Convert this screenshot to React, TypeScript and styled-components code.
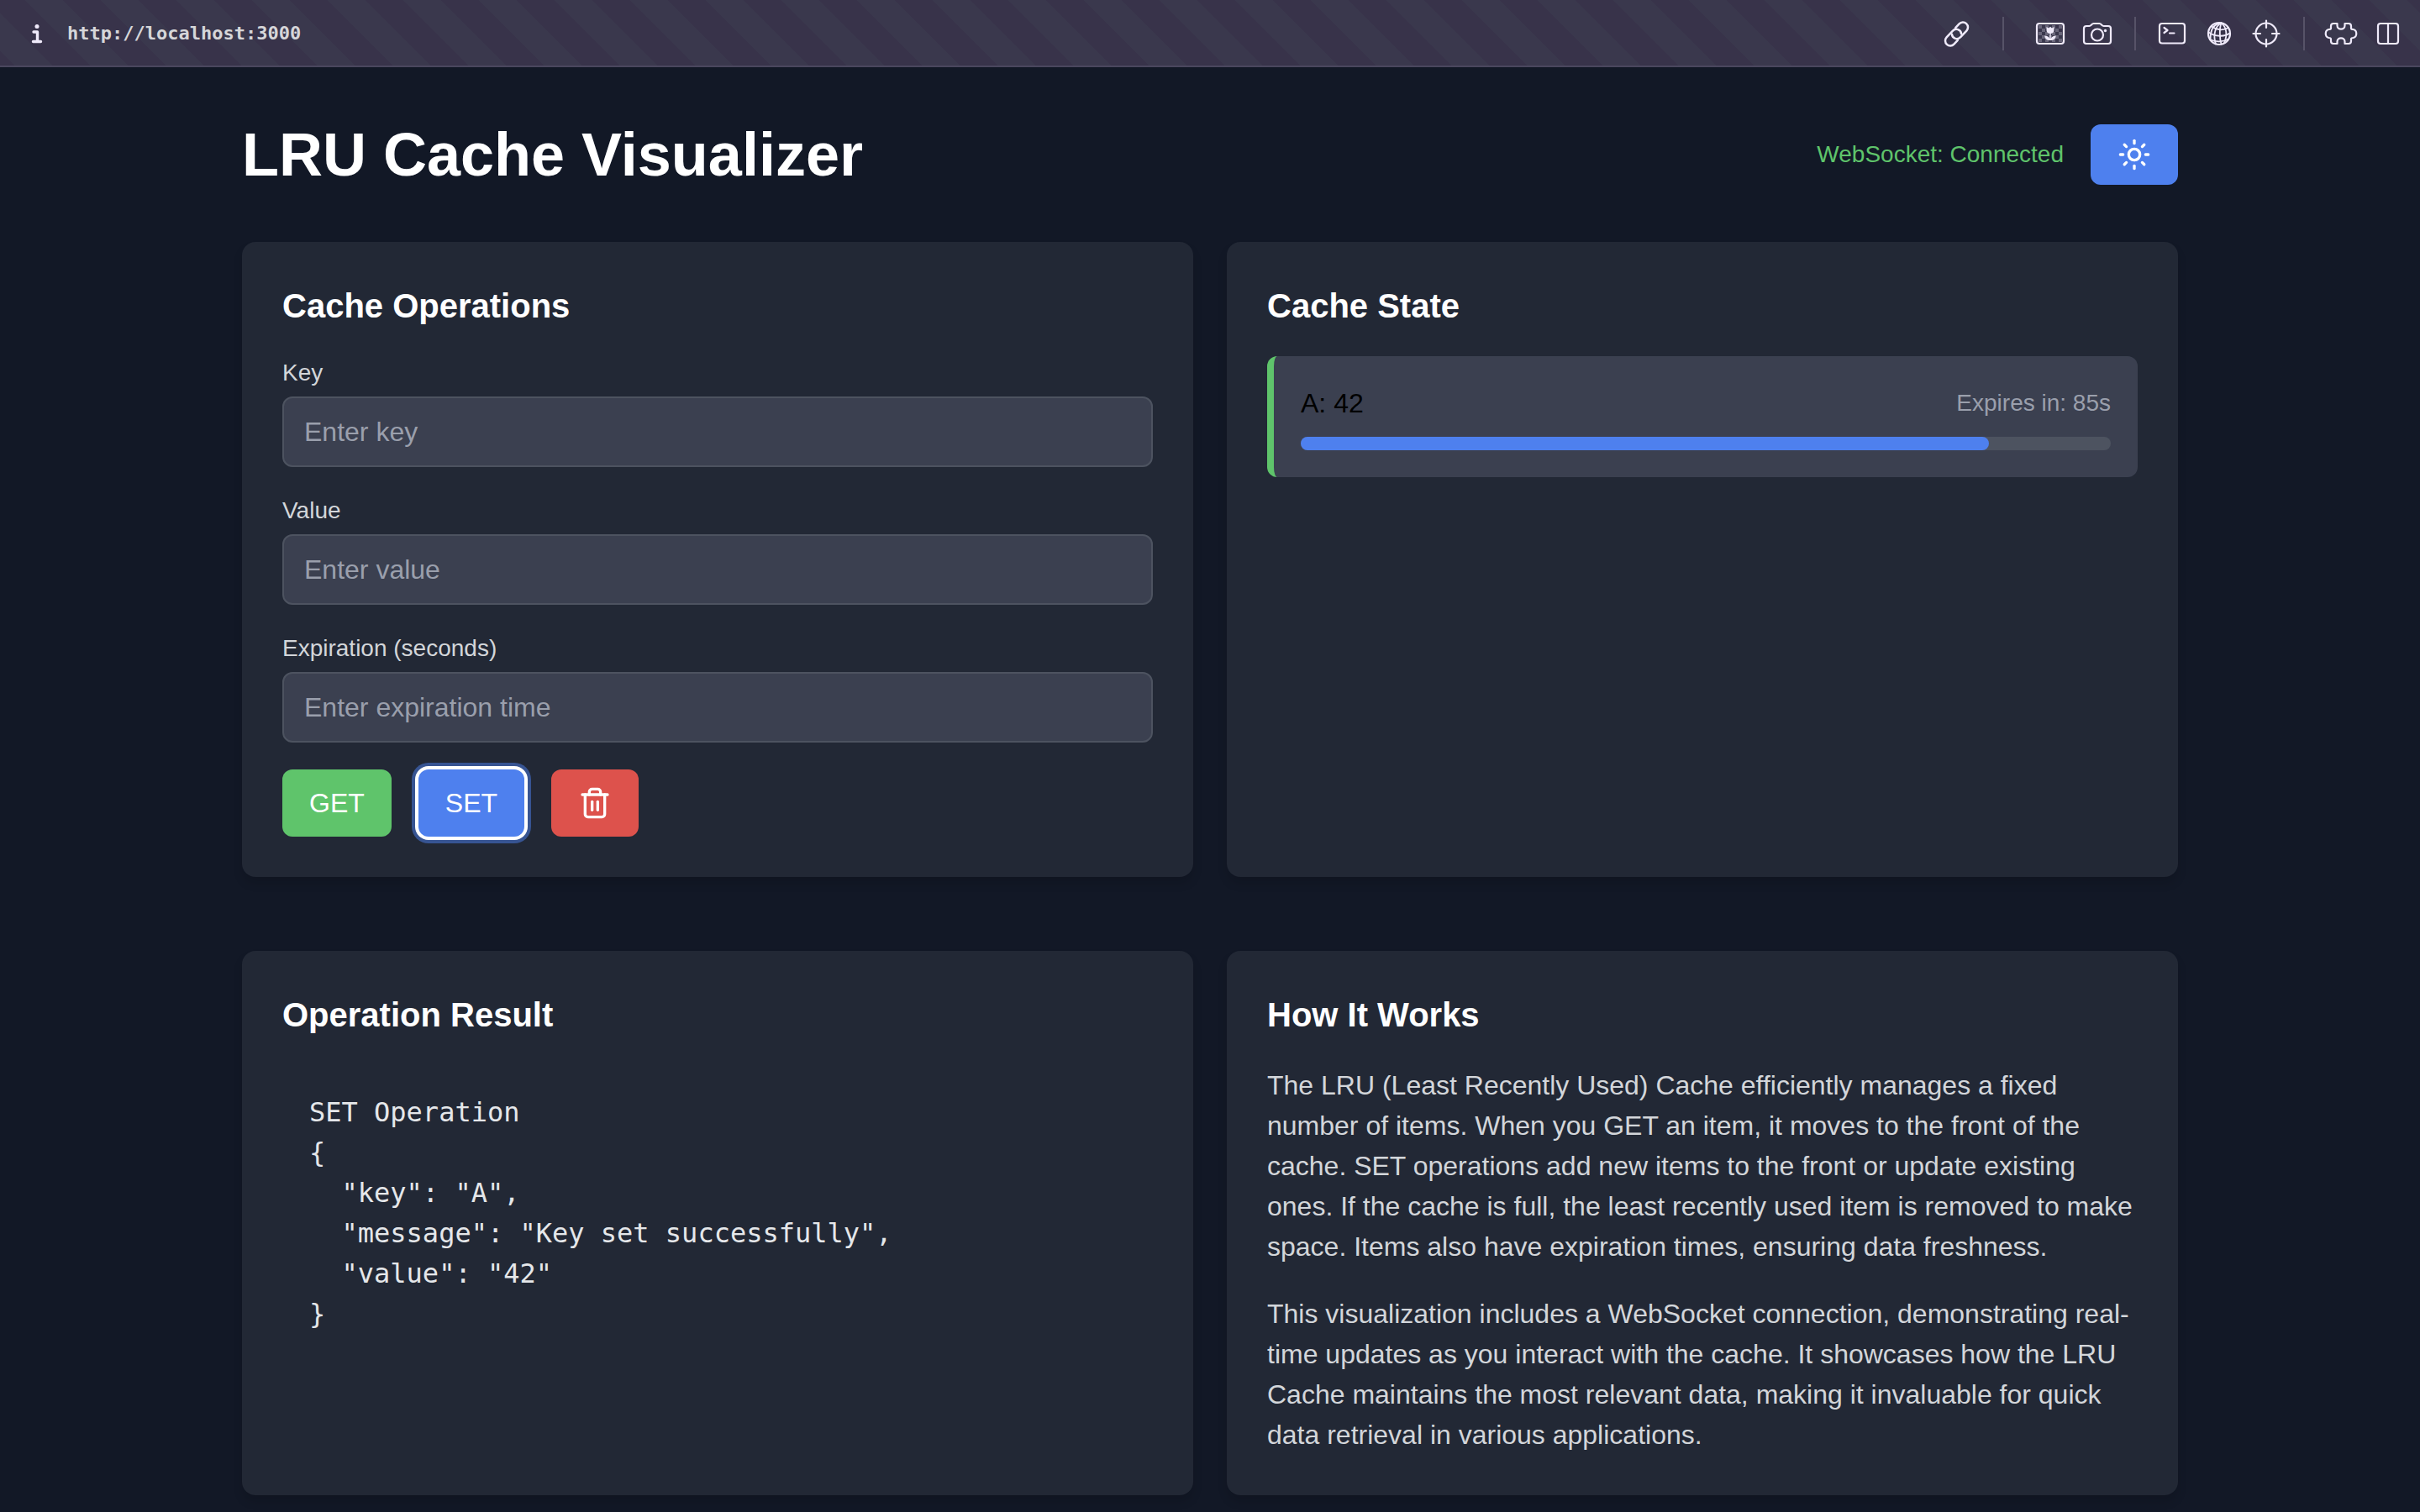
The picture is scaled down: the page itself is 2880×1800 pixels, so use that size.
import React, { useState } from "react";
import styled, { createGlobalStyle, css } from "styled-components";
import { Sun, Trash2 } from "lucide-react";

const color = {
  page: "#121826",
  card: "#222835",
  field: "#3b4050",
  line: "#4d5360",
  blue: "#4e80ee",
  green: "#5fc46b",
  red: "#dd524c",
  white: "#ffffff",
  muted: "#9a9fac",
  soft: "#d3d6da",
  icon: "#efeafa",
};

const sans = `"Liberation Sans", Arial, Helvetica, sans-serif`;
const mono = `"DejaVu Sans Mono", Menlo, monospace`;

const GlobalStyle = createGlobalStyle`
  *, *::before, *::after { box-sizing: border-box; }
  body {
    margin: 0;
    min-height: 100vh;
    background: ${color.page};
    color: #000;
    font-family: ${sans};
    font-size: 32px;
    line-height: 48px;
  }
  h1, h2, p, pre, ul { margin: 0; }
  button, input { font: inherit; }
`;

/* Address bar */

const Toolbar = styled.nav`
  display: flex;
  align-items: center;
  height: 80px;
  padding: 0 10px 0 24px;
  background: linear-gradient(
      45deg,
      #38334a 25%,
      #3a384d 25% 50%,
      #38334a 50% 75%,
      #3a384d 75%
    )
    -15px 0 / 90px 90px;
  box-shadow: inset 0 -2px 0 #4a475e;
`;

const ToolButton = styled.button`
  display: flex;
  align-items: center;
  justify-content: center;
  width: 56px;
  height: 56px;
  padding: 0;
  border: 0;
  background: none;
  color: ${color.icon};
  cursor: pointer;
`;

const InfoButton = styled(ToolButton)`
  width: 40px;
`;

const Address = styled.a`
  margin-left: 16px;
  margin-right: auto;
  color: #d6d6d9;
  font-family: ${mono};
  font-size: 22px;
  font-weight: 700;
  line-height: 32px;
  text-decoration: none;
`;

const Divider = styled.span<{ $wide?: boolean }>`
  width: 2px;
  height: 40px;
  margin: ${(p) => (p.$wide ? "0 27px" : "0 15px 0 16px")};
  background: #575368;
`;

const Glyph = ({ children }: { children: React.ReactNode }) => (
  <svg
    width="40"
    height="40"
    viewBox="0 0 40 40"
    fill="none"
    stroke="currentColor"
    strokeWidth="2.2"
    strokeLinecap="round"
    strokeLinejoin="round"
    aria-hidden="true"
  >
    {children}
  </svg>
);

const InfoGlyph = () => (
  <Glyph>
    <circle cx="20" cy="11.500" r="2.500" fill="currentColor" stroke="none" />
    <path d="M16 18h4.500V29M15.500 29.500h9" strokeWidth="3.400" />
  </Glyph>
);

const LinkGlyph = () => (
  <Glyph>
    <g transform="translate(20.500 20.500) rotate(-47)" strokeWidth="2.500">
      <path d="M-4.500 6H-11a6 6 0 0 1 0-12H-0.500a6 6 0 0 1 4.500 10" />
      <path d="M4.500-6H11a6 6 0 0 1 0 12H0.500a6 6 0 0 1-4.500-10" />
    </g>
  </Glyph>
);

const checks = [0, 1, 2, 3, 4].flatMap((row) =>
  [0, 1, 2, 3, 4, 5, 6].filter((col) => (row + col) % 2 === 0).map((col) => ({ row, col })),
);

const ImageGlyph = () => (
  <Glyph>
    <g fill="currentColor" stroke="none">
      {checks.map(({ row, col }) => (
        <rect key={`${row}-${col}`} x={6 + col * 4} y={10 + row * 4} width="4" height="4" opacity="0.26" />
      ))}
    </g>
    <rect x="4" y="8" width="32" height="24" rx="3" />
    <path d="M15.500 12l2.500 1.500 2-1.800 2 1.800 2.500-1.500v4c0 2.500-2 4-4.500 4s-4.500-1.500-4.500-4z" fill="currentColor" stroke="none" />
    <path d="M19.300 19.500h1.400v6.500c1.200-2.500 3.300-3.700 6-3.500-.2 3.500-2.200 5.500-6.700 5.500s-6.500-2-6.700-5.500c2.700-.2 4.800 1 6 3.500z" fill="currentColor" stroke="none" />
  </Glyph>
);

const CameraGlyph = () => (
  <Glyph>
    <path d="M7 11h3.500c2 0 3-3 5-3h7c2 0 3 3 5 3H33a3 3 0 0 1 3 3v15a3 3 0 0 1-3 3H7a3 3 0 0 1-3-3V14a3 3 0 0 1 3-3z" />
    <circle cx="20" cy="21.500" r="7" />
    <circle cx="29.500" cy="16.500" r="1.700" fill="currentColor" stroke="none" />
  </Glyph>
);

const TerminalGlyph = () => (
  <Glyph>
    <rect x="5" y="8" width="30" height="23.500" rx="3" />
    <path d="M10.500 13l4 3-4 3M17 19.500h5.500" />
  </Glyph>
);

const GlobeGlyph = () => (
  <Glyph>
    <circle cx="20" cy="20" r="13" />
    <g strokeWidth="1.800">
      <path d="M22.500 7.500C15 11 12.500 22 16 32.500" />
      <path d="M22.500 7.500C20 14 20.500 26 22.500 32.500" />
      <path d="M22.500 7.500C29 12 30 22 26 31" />
      <path d="M22.500 7.500C14 8 9.500 14 9.500 27" />
      <path d="M11 11.500C17 16 25 16.500 31 13" />
      <path d="M7.500 18.500C15 24 27 24 32.500 19.500" />
      <path d="M9 27C16 30.500 25 30 31 26.500" />
    </g>
  </Glyph>
);

const CrosshairGlyph = () => (
  <Glyph>
    <circle cx="20" cy="20" r="12.500" />
    <path d="M20 4.500v8.500M20 27v8.500M4.500 20h8.500M27 20h8.500" />
  </Glyph>
);

const PuzzleGlyph = () => (
  <Glyph>
    <path d="M15.500 8H11a3 3 0 0 0-3 3v2.500c0 1.500-1 1.500-2.500 1.500-5 1-5 9 0 10 1.500 0 2.500 0 2.500 1.500V29a3 3 0 0 0 3 3h4.500v-2.500c0-5.500 9-5.500 9 0V32H29a3 3 0 0 0 3-3v-2.500c0-1.500 1-1.500 2.500-1.500 5-1 5-9 0-10-1.500 0-2.500 0-2.500-1.500V11a3 3 0 0 0-3-3h-4.500v2.500c0 5.500-9 5.500-9 0z" />
  </Glyph>
);

const SplitGlyph = () => (
  <Glyph>
    <rect x="8" y="8" width="24" height="24" rx="3" />
    <path d="M20 8v24" />
  </Glyph>
);

/* Page */

const Page = styled.main`
  width: 80%;
  margin: 0 auto;
  padding-top: 48px;
`;

const Header = styled.header`
  display: flex;
  align-items: center;
  justify-content: space-between;
  margin-bottom: 48px;
`;

const Title = styled.h1`
  color: ${color.white};
  font-size: 72px;
  line-height: 112px;
  font-weight: 700;
`;

const HeaderSide = styled.div`
  display: flex;
  align-items: center;
  gap: 32px;
`;

const Status = styled.span`
  color: ${color.green};
  font-size: 28px;
  line-height: 40px;
`;

const Button = styled.button<{ $tone: "green" | "blue" | "red"; $ring?: boolean; $short?: boolean }>`
  display: flex;
  align-items: center;
  justify-content: center;
  padding: ${(p) => (p.$short ? "16px 32px" : "20px 32px")};
  border: 0;
  border-radius: 12px;
  background: ${(p) => color[p.$tone]};
  color: ${color.white};
  line-height: 40px;
  cursor: pointer;
  ${(p) =>
    p.$ring &&
    css`
      box-shadow: 0 0 0 4px ${color.white}, 0 0 0 8px #375492;
    `}
`;

const Grid = styled.div`
  display: grid;
  grid-template-columns: repeat(2, minmax(0, 1fr));
  column-gap: 40px;
  row-gap: 88px;
`;

const Card = styled.section`
  padding: 48px;
  border-radius: 16px;
  background: ${color.card};
  box-shadow: 0 8px 12px rgba(0, 0, 0, 0.12);
`;

const Heading = styled.h2`
  margin-bottom: 32px;
  color: ${color.white};
  font-size: 40px;
  line-height: 56px;
  font-weight: 700;
`;

const Fields = styled.form`
  display: flex;
  flex-direction: column;
  gap: 32px;
`;

const Field = styled.div`
  display: flex;
  flex-direction: column;
  gap: 8px;
`;

const Label = styled.label`
  color: ${color.soft};
  font-size: 28px;
  line-height: 40px;
`;

const Input = styled.input`
  width: 100%;
  padding: 16px 24px;
  border: 2px solid ${color.line};
  border-radius: 12px;
  background: ${color.field};
  color: ${color.white};
  line-height: 48px;
  outline: none;
  &::placeholder {
    color: ${color.muted};
    opacity: 1;
  }
`;

const Actions = styled.div`
  display: flex;
  gap: 32px;
`;

const ItemList = styled.ul`
  padding: 0;
  list-style: none;
`;

const Item = styled.li`
  padding: 32px;
  border-left: 8px solid ${color.green};
  border-radius: 12px;
  background: ${color.field};
`;

const ItemRow = styled.div`
  display: flex;
  align-items: center;
  justify-content: space-between;
  margin-bottom: 16px;
`;

const Expiry = styled.span`
  color: ${color.muted};
  font-size: 28px;
  line-height: 40px;
`;

const Track = styled.div`
  height: 16px;
  border-radius: 8px;
  background: ${color.line};
`;

const Fill = styled.div`
  height: 100%;
  border-radius: 8px;
  background: ${color.blue};
`;

const Result = styled.pre`
  padding: 32px;
  color: #e5e7ea;
  font-family: ${mono};
  white-space: pre-wrap;
`;

const Prose = styled.div`
  display: flex;
  flex-direction: column;
  gap: 32px;
  color: ${color.soft};
`;

const fields = [
  { id: "key", label: "Key", placeholder: "Enter key" },
  { id: "value", label: "Value", placeholder: "Enter value" },
  { id: "expiration", label: "Expiration (seconds)", placeholder: "Enter expiration time" },
];

const items = [{ key: "A", value: "42", left: 85, total: 100 }];

const result = { key: "A", message: "Key set successfully", value: "42" };

export default function App() {
  const [values, setValues] = useState<Record<string, string>>({});

  return (
    <>
      <GlobalStyle />
      <Toolbar aria-label="Browser">
        <InfoButton aria-label="Page info">
          <InfoGlyph />
        </InfoButton>
        <Address href="http://localhost:3000">http://localhost:3000</Address>
        <ToolButton aria-label="Copy link"><LinkGlyph /></ToolButton>
        <Divider $wide />
        <ToolButton aria-label="Images"><ImageGlyph /></ToolButton>
        <ToolButton aria-label="Capture"><CameraGlyph /></ToolButton>
        <Divider />
        <ToolButton aria-label="Console"><TerminalGlyph /></ToolButton>
        <ToolButton aria-label="Network"><GlobeGlyph /></ToolButton>
        <ToolButton aria-label="Inspect"><CrosshairGlyph /></ToolButton>
        <Divider />
        <ToolButton aria-label="Extensions"><PuzzleGlyph /></ToolButton>
        <ToolButton aria-label="Split view"><SplitGlyph /></ToolButton>
      </Toolbar>

      <Page>
        <Header>
          <Title>LRU Cache Visualizer</Title>
          <HeaderSide>
            <Status>WebSocket: Connected</Status>
            <Button $tone="blue" $short aria-label="Toggle theme">
              <Sun size={40} />
            </Button>
          </HeaderSide>
        </Header>

        <Grid>
          <Card>
            <Heading>Cache Operations</Heading>
            <Fields onSubmit={(e) => e.preventDefault()}>
              {fields.map((f) => (
                <Field key={f.id}>
                  <Label htmlFor={f.id}>{f.label}</Label>
                  <Input
                    id={f.id}
                    placeholder={f.placeholder}
                    value={values[f.id] ?? ""}
                    onChange={(e) => setValues({ ...values, [f.id]: e.target.value })}
                  />
                </Field>
              ))}
              <Actions>
                <Button type="button" $tone="green">GET</Button>
                <Button type="button" $tone="blue" $ring>SET</Button>
                <Button type="button" $tone="red" aria-label="Delete">
                  <Trash2 size={40} />
                </Button>
              </Actions>
            </Fields>
          </Card>

          <Card>
            <Heading>Cache State</Heading>
            <ItemList>
              {items.map((item) => (
                <Item key={item.key}>
                  <ItemRow>
                    <span>{`${item.key}: ${item.value}`}</span>
                    <Expiry>{`Expires in: ${item.left}s`}</Expiry>
                  </ItemRow>
                  <Track role="progressbar" aria-label="Time left" aria-valuenow={item.left} aria-valuemax={item.total}>
                    <Fill style={{ width: `${(item.left / item.total) * 100}%` }} />
                  </Track>
                </Item>
              ))}
            </ItemList>
          </Card>

          <Card>
            <Heading>Operation Result</Heading>
            <Result>{`SET Operation\n${JSON.stringify(result, null, 2)}`}</Result>
          </Card>

          <Card>
            <Heading>How It Works</Heading>
            <Prose>
              <p>
                The LRU (Least Recently Used) Cache efficiently manages a fixed number of items. When you GET an item,
                it moves to the front of the cache. SET operations add new items to the front or update existing ones.
                If the cache is full, the least recently used item is removed to make space. Items also have expiration
                times, ensuring data freshness.
              </p>
              <p>
                This visualization includes a WebSocket connection, demonstrating real-time updates as you interact
                with the cache. It showcases how the LRU Cache maintains the most relevant data, making it invaluable
                for quick data retrieval in various applications.
              </p>
            </Prose>
          </Card>
        </Grid>
      </Page>
    </>
  );
}
